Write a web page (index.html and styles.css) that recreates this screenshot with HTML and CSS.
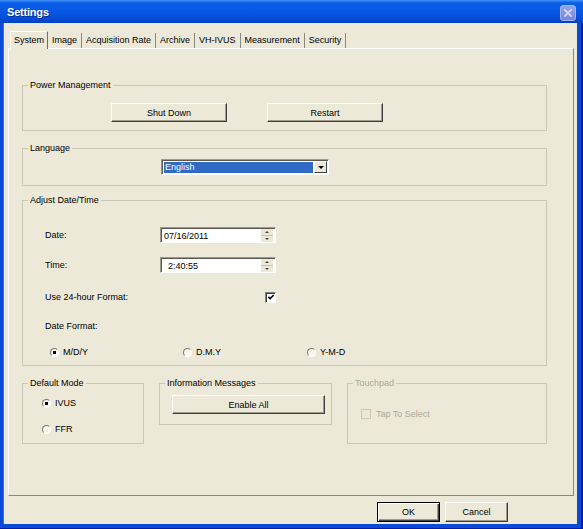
FILE: index.html
```html
<!DOCTYPE html>
<html lang="en">

<head>
    <meta charset="UTF-8">
    <meta name="viewport" content="width=device-width, initial-scale=1.0">
    <title>Settings</title>
    <link rel="stylesheet" href="styles.css">
</head>

<body>
    <div class="window">
        <div class="titlebar">
            <span class="title">Settings</span>
            <span class="close-btn">
                <svg width="16" height="16" viewBox="0 0 16 16">
                    <path d="M4.5 4.5 L11.5 11.5 M11.5 4.5 L4.5 11.5" stroke="#d3daf6" stroke-width="2" stroke-linecap="square" fill="none"/>
                </svg>
            </span>
        </div>

        <div class="client">
            <div class="tabs">
                <span class="tab active">System</span>
                <span class="tab">Image</span>
                <span class="tab">Acquisition Rate</span>
                <span class="tab">Archive</span>
                <span class="tab">VH-IVUS</span>
                <span class="tab">Measurement</span>
                <span class="tab">Security</span>
            </div>

            <div class="page">
                <!-- Power Management -->
                <fieldset class="group group-power">
                    <legend>Power Management</legend>
                    <div class="power-buttons">
                        <button class="btn btn-wide">Shut Down</button>
                        <button class="btn btn-wide">Restart</button>
                    </div>
                </fieldset>

                <!-- Language -->
                <fieldset class="group group-lang">
                    <legend>Language</legend>
                    <div class="combo">
                        <span class="combo-value">English</span>
                        <span class="combo-arrow"><span class="tri-down"></span></span>
                    </div>
                </fieldset>

                <!-- Date / Time -->
                <fieldset class="group group-date">
                    <legend>Adjust Date/Time</legend>
                    <div class="field">
                        <span>Date:</span>
                        <div class="spin">
                            <span class="spin-text">07/16/2011</span>
                            <span class="spin-btns"><span><i class="tri-up"></i></span><span><i class="tri-down small"></i></span></span>
                        </div>
                    </div>
                    <div class="field field-time">
                        <span>Time:</span>
                        <div class="spin">
                            <span class="spin-text time">2:40:55</span>
                            <span class="spin-btns"><span><i class="tri-up"></i></span><span><i class="tri-down small"></i></span></span>
                        </div>
                    </div>
                    <div class="field field-check">
                        <span>Use 24-hour Format:</span>
                        <span class="checkbox">
                            <svg width="9" height="9" viewBox="0 0 9 9">
                                <path d="M1.5 3.8 L3.5 5.8 L7.5 1.8" stroke="#000" stroke-width="1.7" fill="none"/>
                            </svg>
                        </span>
                    </div>
                    <div class="field field-fmt">
                        <span>Date Format:</span>
                    </div>
                    <div class="radios">
                        <label class="opt"><span class="radio on"></span>M/D/Y</label>
                        <label class="opt"><span class="radio"></span>D.M.Y</label>
                        <label class="opt"><span class="radio"></span>Y-M-D</label>
                    </div>
                </fieldset>

                <div class="bottom-row">
                    <fieldset class="group group-mode">
                        <legend>Default Mode</legend>
                        <label class="opt"><span class="radio on"></span>IVUS</label>
                        <label class="opt"><span class="radio"></span>FFR</label>
                    </fieldset>

                    <fieldset class="group group-info">
                        <legend>Information Messages</legend>
                        <button class="btn btn-enable">Enable All</button>
                    </fieldset>

                    <fieldset class="group group-touch">
                        <legend>Touchpad</legend>
                        <label class="opt disabled"><span class="checkbox off"></span>Tap To Select</label>
                    </fieldset>
                </div>
            </div>

            <div class="actions">
                <button class="btn btn-action default">OK</button>
                <button class="btn btn-action">Cancel</button>
            </div>
        </div>
    </div>
</body>

</html>
```

FILE: styles.css
```css
body {
    margin: 0;
    font-family: "Liberation Sans", Arial, sans-serif;
    font-size: 9px;
    color: #000;
    background: #fff;
}

/* Window frame */
.window {
    width: 583px;
    height: 529px;
    box-sizing: border-box;
    background: #0b4ad8;
    border-right: 2px solid #00168f;
    border-bottom: 1px solid #0020a8;
    display: flex;
    flex-direction: column;
}

.titlebar {
    height: 23px;
    margin-right: -2px;
    padding: 0 7px;
    display: flex;
    justify-content: space-between;
    align-items: flex-start;
    background: linear-gradient(#4493f8 0, #0a5ee8 3px, #0557e2 55%, #044bd4 85%, #0340c2 100%);
}

.title {
    color: #fff;
    font-weight: bold;
    font-size: 11px;
    line-height: 23px;
    padding-top: 1px;
    letter-spacing: -0.2px;
    text-shadow: 1px 1px 0 #0b2a8c;
}

.close-btn {
    margin-top: 5px;
    width: 16px;
    height: 16px;
    box-sizing: border-box;
    border: 1px solid #a9b6ee;
    border-radius: 3px;
    background: linear-gradient(#93a4ea, #7486dc);
    display: flex;
    align-items: center;
    justify-content: center;
}

.close-btn svg {
    width: 14px;
    height: 14px;
}

.client {
    flex: 1;
    margin: 0 4px 4px 4px;
    background: #ece9d8;
    box-shadow: -1px 0 0 #2d73ee;
    display: flex;
    flex-direction: column;
}

/* Tabs */
.tabs {
    display: flex;
    align-items: flex-end;
    height: 17px;
    margin: 8px 0 0 6px;
    position: relative;
    z-index: 1;
}

.tab {
    height: 15px;
    line-height: 15px;
    padding: 0 4px;
    border-right: 1px solid #8a887c;
}

.tab.active {
    height: 17px;
    line-height: 16px;
    margin-bottom: -1px;
    padding: 0 3px;
    border-left: 1px solid #fff;
    border-top: 1px solid #fff;
    border-right: 1px solid #716f64;
    background: #ece9d8;
}

.page {
    margin-left: 4px;
    width: 566px;
    height: 448px;
    box-sizing: border-box;
    border: 1px solid;
    border-color: #fff #8a887c #8a887c #fff;
    padding: 30px 0 0 13px;
}

/* Group boxes */
.group {
    width: 525px;
    box-sizing: border-box;
    margin: 0;
    padding: 0;
    min-width: 0;
    border: 1px solid #cac7b7;
}

.group legend {
    margin-left: 5px;
    padding: 0 2px;
    line-height: 12px;
}

.group-power {
    padding: 12px 0 8px;
}

.power-buttons {
    display: flex;
    gap: 40px;
    padding-left: 88px;
}

.group-lang {
    margin-top: 11px;
    padding: 5px 0 10px;
}

.group-lang .combo {
    margin-left: 138px;
}

.group-date {
    margin-top: 8px;
    padding: 21px 0 5px;
}

.group-date .field,
.group-date .radios {
    margin-left: 22px;
}

.bottom-row {
    display: flex;
    align-items: flex-start;
    gap: 15px;
    width: 525px;
    margin-top: 11px;
}

.group-mode {
    width: 122px;
    padding: 7px 0 7px;
    display: flex;
    flex-direction: column;
    gap: 12px;
}

.group-mode .opt {
    margin-left: 19px;
}

.group-info {
    width: 173px;
    padding: 6px 0 10px;
}

.group-info .btn {
    margin-left: 12px;
}

.group-touch {
    flex: 1;
    align-self: stretch;
    padding: 18px 0 0;
    color: #aca899;
}

.group-touch .opt {
    margin-left: 13px;
}

/* Buttons */
.btn {
    font-family: inherit;
    font-size: 9px;
    color: #000;
    background: #ece9d8;
    border: 1px solid;
    border-color: #fff #404040 #404040 #fff;
    box-shadow: inset -1px -1px 0 #9d9a8b;
    padding: 0;
    height: 19px;
}

.btn-wide {
    width: 116px;
}

.btn-enable {
    width: 153px;
}

.btn-action {
    width: 63px;
    height: 20px;
}

.btn.default {
    border-color: #000;
    box-shadow: inset 1px 1px 0 #fff, inset -1px -1px 0 #404040, inset -2px -2px 0 #9d9a8b;
}

.actions {
    display: flex;
    justify-content: flex-end;
    gap: 5px;
    margin-top: 6px;
    padding-right: 69px;
}

/* Combo box */
.combo {
    width: 168px;
    height: 16px;
    box-sizing: border-box;
    border: 1px solid;
    border-color: #9d9a8b #fff #fff #9d9a8b;
    box-shadow: inset 1px 1px 0 #5a5850;
    background: #fff;
    display: flex;
    padding: 2px 1px 1px 2px;
}

.combo-value {
    flex: 1;
    background: #316ac5;
    color: #fff;
    line-height: 11px;
    padding-left: 1px;
    margin-right: 1px;
}

.combo-arrow {
    width: 13px;
    margin-top: -1px;
    box-sizing: border-box;
    background: #ece9d8;
    border: 1px solid;
    border-color: #fff #404040 #404040 #fff;
    display: flex;
    align-items: center;
    justify-content: center;
}

.tri-down {
    display: block;
    width: 0;
    height: 0;
    border-left: 3px solid transparent;
    border-right: 3px solid transparent;
    border-top: 3px solid #000;
}

.tri-up {
    display: block;
    width: 0;
    height: 0;
    border-left: 2px solid transparent;
    border-right: 2px solid transparent;
    border-bottom: 2px solid #444;
}

.tri-down.small {
    border-left-width: 2px;
    border-right-width: 2px;
    border-top: 2px solid #444;
}

/* Date / time fields */
.field {
    display: grid;
    grid-template-columns: 115px 116px;
    align-items: center;
    height: 16px;
}

.field-time {
    margin-top: 14px;
}

.field-check {
    margin-top: 16px;
}

.field-fmt {
    margin-top: 13px;
}

.spin {
    height: 16px;
    box-sizing: border-box;
    border: 1px solid;
    border-color: #9d9a8b #fff #fff #9d9a8b;
    box-shadow: inset 1px 1px 0 #5a5850;
    background: #fff;
    display: flex;
    padding: 1px 1px 0 1px;
}

.spin-text {
    flex: 1;
    line-height: 14px;
    padding-left: 2px;
}

.spin-text.time {
    padding-left: 6px;
}

.spin-btns {
    width: 12px;
    margin-right: 1px;
    display: flex;
    flex-direction: column;
}

.spin-btns span {
    flex: 1;
    background: #ece9d8;
    border-bottom: 1px solid #c5c2b2;
    display: flex;
    align-items: center;
    justify-content: center;
}

.spin-btns span:last-child {
    border-bottom: none;
}

.checkbox {
    justify-self: end;
    width: 11px;
    height: 11px;
    box-sizing: border-box;
    border: 1px solid;
    border-color: #808080 #fff #fff #808080;
    box-shadow: inset 1px 1px 0 #404040;
    background: #fff;
    display: flex;
    align-items: center;
    justify-content: center;
    padding: 1px 0 0 1px;
}

.checkbox.off {
    width: 10px;
    height: 10px;
    border-color: #c9c6b8;
    box-shadow: none;
    background: #ece9d8;
}

/* Radio options */
.radios {
    display: grid;
    grid-template-columns: 133px 124px auto;
    align-items: center;
    height: 16px;
    margin-top: 10px;
    padding-left: 5px;
}

.opt {
    display: flex;
    align-items: center;
    gap: 4px;
    height: 14px;
}

.radio {
    width: 9px;
    height: 9px;
    box-sizing: border-box;
    border-radius: 50%;
    border: 1px solid;
    border-color: #7a786c #fff #fff #7a786c;
    background: #f7f6f1;
}

.radio.on {
    background: radial-gradient(circle, #000 0 1.5px, #f7f6f1 2px);
}

.opt.disabled {
    gap: 5px;
    color: #aca899;
}
```
